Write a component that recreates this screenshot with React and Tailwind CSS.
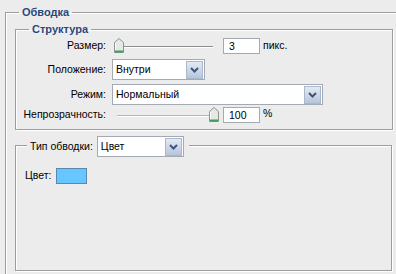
import React from "react";

function Chevron() {
  return (
    <svg width="9" height="6" viewBox="0 0 9 6">
      <path d="M1 1 L4.5 4.5 L8 1" fill="none" stroke="#3f557c" strokeWidth="2" />
    </svg>
  );
}

function Select({ value, width }) {
  return (
    <div className={`flex h-[21px] items-center border border-[#a3aab2] bg-white ${width}`}>
      <span className="flex-1 pl-[3px] leading-none">{value}</span>
      <div className="mr-px flex h-[18px] w-[17px] items-center justify-center border border-[#aab8cf] bg-gradient-to-b from-[#e4eaf3] to-[#b7c5da]">
        <Chevron />
      </div>
    </div>
  );
}

function Thumb() {
  return (
    <svg width="10" height="15" viewBox="0 0 10 15">
      <path d="M5 0.5 L9.5 4.5 L9.5 14.5 L0.5 14.5 L0.5 4.5 Z" fill="#e6e8e6" stroke="#8a958e" />
      <path d="M1 13.5 L9 13.5" stroke="#3da35a" strokeWidth="2" />
      <path d="M1.5 5 L1.5 12" stroke="#ffffff" />
    </svg>
  );
}

function Slider({ thumbLeft, light }) {
  return (
    <div className="relative h-[16px] w-[106px]">
      <div className={`absolute left-[4px] right-[6px] top-[8px] h-px ${light ? "bg-[#b9b5a8]" : "bg-[#8e8e8e]"}`} />
      <div className="absolute left-[4px] right-[6px] top-[9px] h-px bg-[#ffffff]" />
      <div className="absolute top-0" style={{ left: thumbLeft }}>
        <Thumb />
      </div>
    </div>
  );
}

function NumInput({ value }) {
  return (
    <div className="flex h-[16px] w-[37px] items-center border border-[#a3aab2] bg-white pl-[5px] leading-none">
      {value}
    </div>
  );
}

const etched =
  "border border-[#9d9d9d] shadow-[inset_1px_1px_0_#ffffff,1px_1px_0_#ffffff]";

export default function App() {
  return (
    <div className="h-[274px] w-[396px] overflow-hidden bg-[#ececec] pl-[5px] pt-[6px] font-['Liberation_Sans',Arial,sans-serif] text-[10.5px] text-black">
      <fieldset className={`h-[300px] w-[400px] ${etched}`}>
        <legend className="ml-[13px] px-[3px] text-[11px] font-bold leading-[13px] text-[#28497c]">
          Обводка
        </legend>
        <div className="pl-[9px] pt-[4px]">
          <fieldset className={`w-[378px] ${etched}`}>
            <legend className="ml-[13px] px-[3px] text-[11px] font-bold leading-[13px] text-[#28497c]">
              Структура
            </legend>
            <div className="flex flex-col pb-[6px] pt-[2px]">
              <div className="flex h-[16px] items-center">
                <span className="w-[90px] text-right">Размер:</span>
                <div className="ml-[7px]">
                  <Slider thumbLeft={1} />
                </div>
                <div className="ml-[4px]">
                  <NumInput value="3" />
                </div>
                <span className="ml-[3px]">пикс.</span>
              </div>
              <div className="mt-[5px] flex items-center">
                <span className="w-[90px] text-right">Положение:</span>
                <div className="ml-[6px]">
                  <Select value="Внутри" width="w-[93px]" />
                </div>
              </div>
              <div className="mt-[4px] flex items-center">
                <span className="w-[90px] text-right">Режим:</span>
                <div className="ml-[6px]">
                  <Select value="Нормальный" width="w-[211px]" />
                </div>
              </div>
              <div className="mt-[2px] flex h-[16px] items-center">
                <span className="w-[90px] text-right">Непрозрачность:</span>
                <div className="ml-[7px]">
                  <Slider thumbLeft={96} light />
                </div>
                <div className="ml-[4px]">
                  <NumInput value="100" />
                </div>
                <span className="ml-[3px] self-start leading-[12px]">%</span>
              </div>
            </div>
          </fieldset>
          <div className={`mt-[15px] h-[126px] w-[377px] ${etched}`}>
            <div className="-mt-[10px] ml-[11px] flex w-fit items-center bg-[#ececec] pl-[3px] pr-[5px]">
              <span>Тип обводки:</span>
              <div className="ml-[4px]">
                <Select value="Цвет" width="w-[87px]" />
              </div>
            </div>
            <div className="mt-[11px] flex items-center pl-[9px]">
              <span>Цвет:</span>
              <div className="ml-[5px] h-[16px] w-[31px] border border-[#5d87a8] bg-[#66c6ff]" />
            </div>
          </div>
        </div>
      </fieldset>
    </div>
  );
}
